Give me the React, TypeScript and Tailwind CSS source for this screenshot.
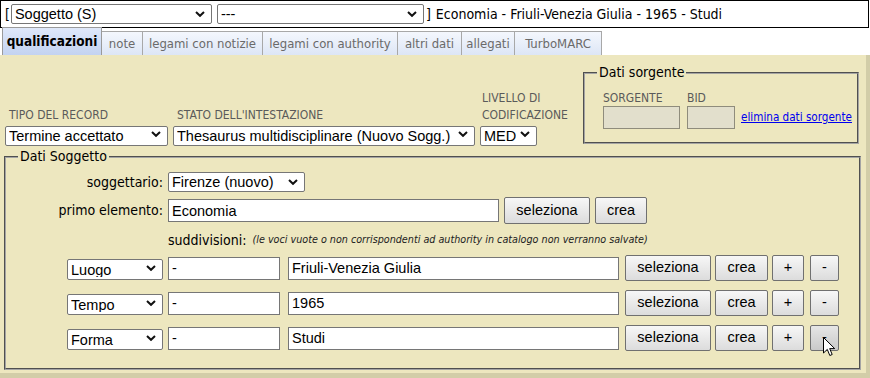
import React from "react";

const tahoma = "font-['DejaVu_Sans_Condensed','DejaVu_Sans',sans-serif]";
const arial = "font-['Liberation_Sans',Arial,sans-serif]";

function Chevron() {
  return (
    <svg
      width="10"
      height="7"
      viewBox="0 0 10 7"
      className="pointer-events-none absolute right-[7px] top-1/2 -translate-y-1/2"
    >
      <path d="M1 1.5 L5 5.3 L9 1.5" fill="none" stroke="#111" strokeWidth="2" />
    </svg>
  );
}

function Sel({ value, className = "" }: { value: string; className?: string }) {
  return (
    <div className={`relative h-[20px] shrink-0 ${className}`}>
      <select
        defaultValue={value}
        className={`h-full w-full appearance-none rounded-[2px] border border-[#767676] bg-white pl-[3px] pr-[20px] text-[14.5px] leading-none text-black ${arial}`}
      >
        <option>{value}</option>
      </select>
      <Chevron />
    </div>
  );
}

function Field({ value = "", className = "", disabled = false }: { value?: string; className?: string; disabled?: boolean }) {
  return (
    <input
      readOnly
      defaultValue={value}
      className={`shrink-0 border px-[3px] text-[14.5px] text-black outline-none ${arial} ${
        disabled ? "border-[#8f8c7c] bg-[#e2dfcc]" : "border-[#767676] bg-white"
      } ${className}`}
    />
  );
}

function Btn({ label, className = "", hover = false }: { label: string; className?: string; hover?: boolean }) {
  return (
    <button
      type="button"
      className={`shrink-0 rounded-[2px] border border-[#707070] bg-linear-to-b text-[14.5px] text-black ${arial} ${
        hover ? "from-[#e6e6e6] to-[#c9c9c9]" : "from-[#f7f7f7] to-[#dcdcdc]"
      } ${className}`}
    >
      {label}
    </button>
  );
}

function Cursor() {
  return (
    <svg width="13" height="20" viewBox="0 0 13 20" className="pointer-events-none absolute left-[13px] top-[12px]">
      <path
        d="M0.5 0.5 L0.5 16 L4.3 12.4 L6.8 18.5 L9.2 17.5 L6.7 11.6 L11.7 11.6 Z"
        fill="#fff"
        stroke="#000"
        strokeWidth="1"
        strokeLinejoin="round"
      />
    </svg>
  );
}

const tabs = [
  { label: "note", w: "w-[41px]" },
  { label: "legami con notizie", w: "w-[120px]" },
  { label: "legami con authority", w: "w-[135px]" },
  { label: "altri dati", w: "w-[64px]" },
  { label: "allegati", w: "w-[53px]" },
  { label: "TurboMARC", w: "w-[87px]" },
];

const subdivisions = [
  { type: "Luogo", value: "Friuli-Venezia Giulia" },
  { type: "Tempo", value: "1965" },
  { type: "Forma", value: "Studi" },
];

export default function App() {
  return (
    <div className="h-[378px] w-[870px] overflow-hidden bg-white text-black">
      {/* title bar */}
      <div className={`flex h-[28px] w-[869px] items-center border border-black pl-[4px] text-[14px] ${tahoma}`}>
        <span>[</span>
        <Sel value="Soggetto (S)" className="ml-[1px] w-[201px]" />
        <Sel value="---" className="ml-[5px] w-[207px]" />
        <span className="ml-[2px]">]</span>
        <span className="ml-[5px]">Economia - Friuli-Venezia Giulia - 1965 - Studi</span>
      </div>

      {/* tabs */}
      <div className={`flex h-[27px] items-end pl-[2px] text-[13px] ${tahoma}`}>
        <div className="flex h-[28px] w-[100px] items-center justify-center border border-b-0 border-[#9a9a9a] bg-linear-to-b from-[#dfe8fa] to-[#c3d3f1] text-[13.5px] font-bold">
          qualificazioni
        </div>
        {tabs.map((t) => (
          <div
            key={t.label}
            className={`flex h-[24px] ${t.w} items-center justify-center border border-l-0 border-b-0 border-[#a8a8a8] bg-linear-to-b from-[#f4f7fd] to-[#dde6f6] text-[#6a6a6a]`}
          >
            {t.label}
          </div>
        ))}
      </div>

      {/* panel */}
      <div className={`h-[323px] border-r-[4px] border-b-[5px] border-[#d2cda8] bg-[#ede7bf] ${tahoma}`}>
        <div className="flex items-end pl-[5px] pt-[9px]">
          <div className="flex items-end gap-[5px]">
            <div className="flex flex-col">
              <span className="pl-[4px] text-[12px] leading-[17px] text-[#5a5a5a]">TIPO DEL RECORD</span>
              <Sel value="Termine accettato" className="w-[163px]" />
            </div>
            <div className="flex flex-col">
              <span className="pl-[4px] text-[12px] leading-[17px] text-[#5a5a5a]">STATO DELL'INTESTAZIONE</span>
              <Sel value="Thesaurus multidisciplinare (Nuovo Sogg.)" className="w-[302px]" />
            </div>
            <div className="flex w-[88px] flex-col">
              <span className="pl-[2px] text-[12px] leading-[17px] text-[#5a5a5a]">
                LIVELLO DI
                <br />
                CODIFICAZIONE
              </span>
              <Sel value="MED" className="w-[57px]" />
            </div>
          </div>
          <fieldset className="ml-auto mr-[7px] w-[276px] min-w-0 border-2 border-[#a4a4a4] pb-[13px] pl-[10px] pr-[4px] [border-style:groove]">
            <legend className="ml-[2px] px-[2px] text-[14px] leading-[17px]">Dati sorgente</legend>
            <div className="ml-[8px] mt-[10px] flex items-end">
              <div className="flex flex-col">
                <span className="text-[12px] leading-[15px] text-[#5a5a5a]">SORGENTE</span>
                <Field disabled className="h-[23px] w-[77px]" />
              </div>
              <div className="ml-[7px] flex flex-col">
                <span className="text-[12px] leading-[15px] text-[#5a5a5a]">BID</span>
                <Field disabled className="h-[23px] w-[48px]" />
              </div>
              <a href="#" className="mb-[4px] ml-[6px] whitespace-nowrap text-[11.6px] leading-[15px] text-[#0000ee] underline">
                elimina dati sorgente
              </a>
            </div>
          </fieldset>
        </div>

        <fieldset className="ml-[4px] mr-[5px] mt-[4px] border-2 border-[#a4a4a4] px-[12px] pb-[17px] [border-style:groove]">
          <legend className="px-[2px] text-[14px] leading-[17px]">Dati Soggetto</legend>

          <div className="mt-[7px] flex h-[20px] items-center gap-[5px] text-[14px]">
            <span className="w-[145px] text-right">soggettario:</span>
            <Sel value="Firenze (nuovo)" className="w-[137px]" />
          </div>

          <div className="mt-[5px] flex h-[27px] items-center text-[14px]">
            <span className="w-[145px] text-right">primo elemento:</span>
            <Field value="Economia" className="ml-[5px] h-[23px] w-[331px]" />
            <Btn label="seleziona" className="ml-[5px] h-[27px] w-[86px]" />
            <Btn label="crea" className="ml-[5px] h-[27px] w-[52px]" />
          </div>

          <div className="mt-[8px] flex h-[17px] items-center pl-[150px]">
            <span className="text-[14px]">suddivisioni:</span>
            <span className="ml-[6px] whitespace-nowrap text-[10.7px] italic text-[#222]">
              (le voci vuote o non corrispondenti ad authority in catalogo non verranno salvate)
            </span>
          </div>

          {subdivisions.map((s, i) => (
            <div key={s.type} className={`flex h-[26px] items-center ${i === 0 ? "mt-[6px]" : "mt-[9px]"}`}>
              <div className="flex w-[145px] justify-end">
                <Sel value={s.type} className="h-[21px] w-[96px]" />
              </div>
              <Field value="-" className="ml-[5px] h-[23px] w-[112px]" />
              <Field value={s.value} className="ml-[8px] h-[23px] w-[331px]" />
              <Btn label="seleziona" className="ml-[6px] h-[26px] w-[86px]" />
              <Btn label="crea" className="ml-[4px] h-[26px] w-[53px]" />
              <Btn label="+" className="ml-[4px] h-[26px] w-[32px]" />
              <div className="relative ml-[6px]">
                <Btn label="-" hover={i === 2} className="h-[26px] w-[29px]" />
                {i === 2 && <Cursor />}
              </div>
            </div>
          ))}
        </fieldset>
      </div>
    </div>
  );
}
